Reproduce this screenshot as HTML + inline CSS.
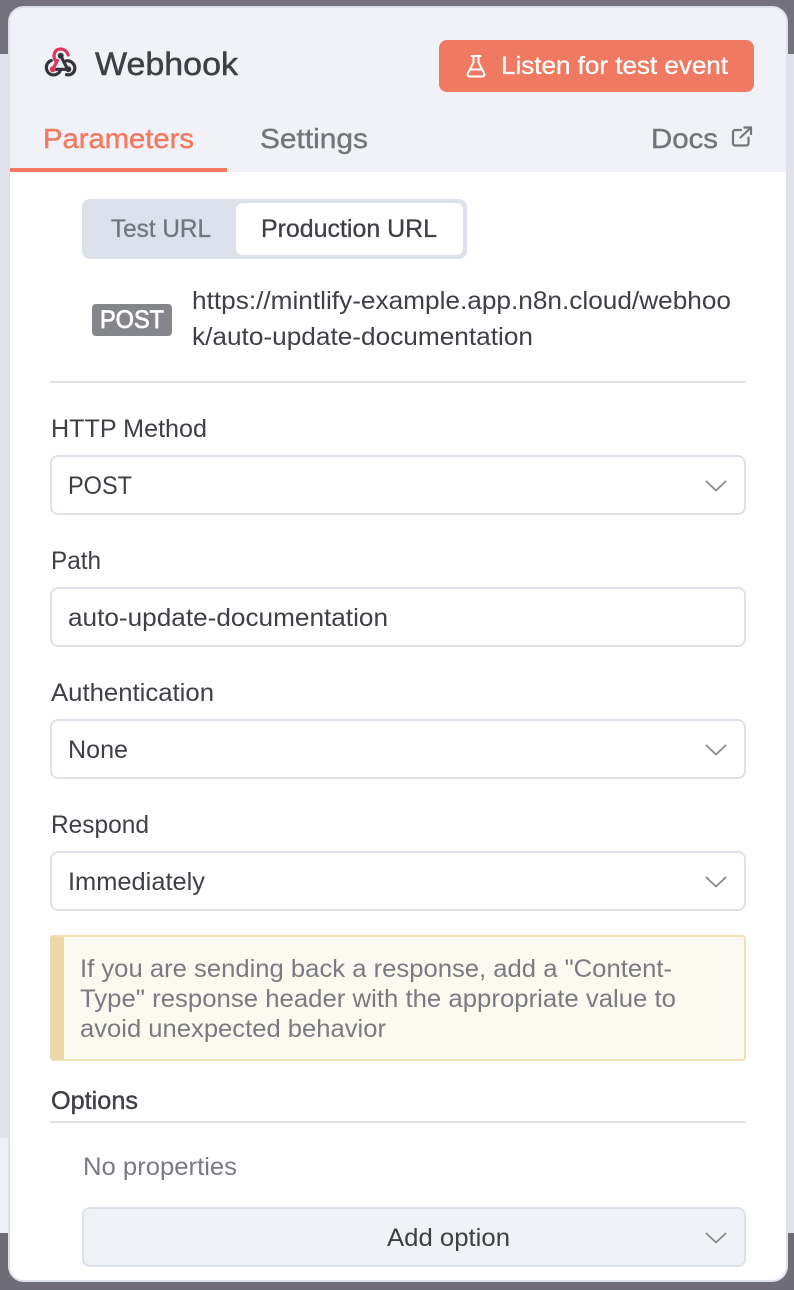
<!DOCTYPE html>
<html lang="en">
<head>
<meta charset="utf-8">
<title>Webhook</title>
<style>
html,body{margin:0;padding:0;width:794px;height:1290px;overflow:hidden;background:#e0e3ee}
.a{position:absolute;box-sizing:border-box}
svg{position:absolute;left:0;top:0}
text{font-family:"Liberation Sans",sans-serif;font-size:25px}
.field{left:50px;width:696px;height:60px;background:#fff;border:2px solid #dde1ec;border-radius:8px}
.dark{fill:#3f4046}
.mute{fill:#7a7b82}
</style>
</head>
<body>
<div class="a" style="left:0;top:0;width:794px;height:54px;background:#73727c"></div>
<div class="a" style="left:0;top:1138px;width:8px;height:95px;background:#eef0f5"></div>
<div class="a" style="left:0;top:1233px;width:794px;height:57px;background:#6e6d77"></div>

<div class="a" style="left:8px;top:6px;width:780px;height:1276px;background:#fff;border:2px solid #dde1ec;border-radius:16px;overflow:hidden">
  <div class="a" style="left:0;top:0;width:776px;height:164px;background:#f0f2f7"></div>
  <div class="a" style="left:0;top:160px;width:217px;height:4px;background:#f5795e"></div>
</div>

<div class="a" style="left:439px;top:40px;width:315px;height:52px;background:#f07962;border-radius:8px"></div>

<div class="a" style="left:82px;top:199px;width:385px;height:60px;background:#dde1ec;border-radius:8px"></div>
<div class="a" style="left:236px;top:203px;width:227px;height:52px;background:#fff;border-radius:7px"></div>
<div class="a" style="left:92px;top:304px;width:80px;height:32px;background:#85868c;border-radius:4px"></div>
<div class="a" style="left:50px;top:381px;width:696px;height:2px;background:#dde1ec"></div>

<div class="a field" style="top:455px"></div>
<div class="a field" style="top:587px"></div>
<div class="a field" style="top:719px"></div>
<div class="a field" style="top:851px"></div>

<div class="a" style="left:50px;top:935px;width:696px;height:126px;background:#fcf9f0;border:2px solid #f3dfb9;border-left:14px solid #eed8ab;border-radius:4px"></div>
<div class="a" style="left:50px;top:1121px;width:696px;height:2px;background:#dde1ec"></div>
<div class="a" style="left:82px;top:1207px;width:664px;height:60px;background:#f0f2f7;border:2px solid #dde1ec;border-radius:8px"></div>

<svg width="794" height="1290" viewBox="0 0 794 1290" xmlns="http://www.w3.org/2000/svg">
  <!-- webhook logo -->
  <g fill="none" stroke-width="3.200" stroke-linecap="round">
    <path d="M60.700 55.700 L67.500 69 M53 69.300 H68.300" stroke="#34363d"/>
    <path d="M51.200 60.500 C46.500 62.500 45.500 67 47 70.500 C48.500 74.500 53 75.800 56.500 74.300 C58.800 73.300 60 71.800 60.300 70" stroke="#34363d"/>
    <path d="M66.500 60.800 C71 60.500 75 64 74.800 68.500 C74.600 73 70.500 75.800 66.500 74.600" stroke="#34363d"/>
    <path d="M55.300 60.500 C53 56.500 54 51.500 57.500 49.700 C61.500 47.800 66.800 50 68.200 55" stroke="#e0345a"/>
    <path d="M52.800 69 L57.500 60.500" stroke="#e0345a"/>
  </g>
  <circle cx="52.800" cy="69.300" r="3" fill="#e0345a"/>
  <circle cx="60.700" cy="55.700" r="3" fill="#34363d"/>
  <circle cx="68.300" cy="69.300" r="3" fill="#34363d"/>

  <!-- flask -->
  <path d="M471.500 56 H480.500 M473.500 56 V62.500 L468 73 C467 75 468 76.500 470 76.500 H482 C484 76.500 485 75 484 73 L478.500 62.500 V56 M470.500 69.500 H481.500" fill="none" stroke="#fff" stroke-width="2" stroke-linecap="round" stroke-linejoin="round"/>

  <!-- external link -->
  <path d="M741 130 H735 C733.800 130 733 130.800 733 132 V143.500 C733 144.700 733.800 145.500 735 145.500 H746.500 C747.700 145.500 748.500 144.700 748.500 143.500 V137.500 M740.500 137.500 L751 127.500 M744.500 127.500 H751 V134" fill="none" stroke="#73757c" stroke-width="2.200" stroke-linecap="round" stroke-linejoin="round"/>

  <!-- chevrons -->
  <g fill="none" stroke="#88898f" stroke-width="1.800" stroke-linecap="round" stroke-linejoin="round">
    <path d="M706.500 481.500 L716 490.500 L725.500 481.500"/>
    <path d="M706.500 745.500 L716 754.500 L725.500 745.500"/>
    <path d="M706.500 877.500 L716 886.500 L725.500 877.500"/>
    <path d="M706.500 1233.500 L716 1242.500 L725.500 1233.500"/>
  </g>

  <text x="95" y="75" textLength="143" lengthAdjust="spacingAndGlyphs" style="font-size:32.500px" class="dark" stroke="#3f4046" stroke-width=".5">Webhook</text>
  <text x="501" y="74" textLength="227" lengthAdjust="spacingAndGlyphs" fill="#fff" stroke="#fff" stroke-width=".3">Listen for test event</text>
  <text x="43" y="148" textLength="151" lengthAdjust="spacingAndGlyphs" style="font-size:28px" fill="#f3785f" stroke="#f3785f" stroke-width=".4">Parameters</text>
  <text x="260" y="148" textLength="108" lengthAdjust="spacingAndGlyphs" style="font-size:28px" fill="#73757c" stroke="#73757c" stroke-width=".4">Settings</text>
  <text x="651" y="148" textLength="67" lengthAdjust="spacingAndGlyphs" style="font-size:28px" fill="#73757c" stroke="#73757c" stroke-width=".4">Docs</text>

  <text x="111" y="237" textLength="100" lengthAdjust="spacingAndGlyphs" fill="#73757c" stroke="#73757c" stroke-width=".3">Test URL</text>
  <text x="261" y="237" textLength="176" lengthAdjust="spacingAndGlyphs" class="dark" stroke="#3f4046" stroke-width=".3">Production URL</text>
  <text x="100" y="328" textLength="64" lengthAdjust="spacingAndGlyphs" fill="#fff" stroke="#fff" stroke-width=".8">POST</text>
  <text x="192" y="309" textLength="539" lengthAdjust="spacingAndGlyphs" class="dark">https://mintlify-example.app.n8n.cloud/webhoo</text>
  <text x="192" y="345" textLength="341" lengthAdjust="spacingAndGlyphs" class="dark">k/auto-update-documentation</text>

  <text x="51" y="437" textLength="156" lengthAdjust="spacingAndGlyphs" class="dark">HTTP Method</text>
  <text x="68" y="494" textLength="64" lengthAdjust="spacingAndGlyphs" class="dark">POST</text>
  <text x="51" y="569" textLength="50" lengthAdjust="spacingAndGlyphs" class="dark">Path</text>
  <text x="68" y="626" textLength="320" lengthAdjust="spacingAndGlyphs" class="dark">auto-update-documentation</text>
  <text x="51" y="701" textLength="163" lengthAdjust="spacingAndGlyphs" class="dark">Authentication</text>
  <text x="68" y="758" textLength="60" lengthAdjust="spacingAndGlyphs" class="dark">None</text>
  <text x="51" y="833" textLength="98" lengthAdjust="spacingAndGlyphs" class="dark">Respond</text>
  <text x="68" y="890" textLength="137" lengthAdjust="spacingAndGlyphs" class="dark">Immediately</text>

  <text x="80" y="977" textLength="592" lengthAdjust="spacingAndGlyphs" class="mute">If you are sending back a response, add a "Content-</text>
  <text x="80" y="1007" textLength="596" lengthAdjust="spacingAndGlyphs" class="mute">Type" response header with the appropriate value to</text>
  <text x="80" y="1037" textLength="306" lengthAdjust="spacingAndGlyphs" class="mute">avoid unexpected behavior</text>

  <text x="51" y="1109" textLength="87" lengthAdjust="spacingAndGlyphs" class="dark" stroke="#3f4046" stroke-width=".4">Options</text>
  <text x="83" y="1175" textLength="154" lengthAdjust="spacingAndGlyphs" class="mute">No properties</text>
  <text x="387" y="1246" textLength="123" lengthAdjust="spacingAndGlyphs" class="dark">Add option</text>
</svg>
</body>
</html>
